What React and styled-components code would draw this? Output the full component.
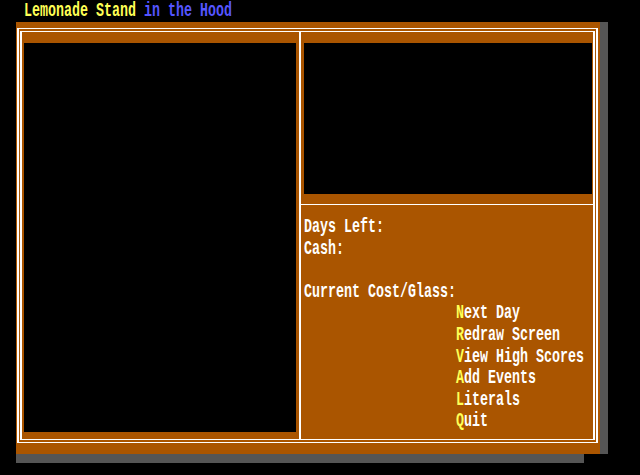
import React from 'react';
import styled, { createGlobalStyle } from 'styled-components';

// Text-mode palette
const BROWN = '#aa5500';
const YELLOW = '#ffff55';
const BLUE = '#5555ff';
const GRAY = '#555555';
const WHITE = '#ffffff';

const Global = createGlobalStyle`
  html, body { margin: 0; padding: 0; background: #000; }
`;

const Screen = styled.div`
  width: 640px;
  height: 475px;
  overflow: hidden;
  background: #000;
  color: ${WHITE};
  font-family: "Liberation Mono", "DejaVu Sans Mono", monospace;
  font-weight: bold;
  font-size: 13.33px;
`;

// One 21.6px text row, glyphs stretched tall like a VGA cell
const Line = styled.div`
  height: 21.6px;
  line-height: 21.6px;
  white-space: pre;
  padding-left: ${p => p.$indent || 0}px;
  color: ${p => p.$color || WHITE};
`;

const Glyphs = styled.span`
  display: inline-block;
  transform: translateY(1px) scaleY(1.5);
  transform-origin: 50% 55%;
`;

const Ink = styled.span`
  color: ${p => p.$c};
`;

const Window = styled.div`
  box-sizing: border-box;
  margin-left: 16px;
  width: 584px;
  height: 432px;
  background: ${BROWN};
  box-shadow: 8px 0 0 ${GRAY}, -8px 17px 0 -8px ${GRAY};
  padding: 6.75px 2px 10.8px 1px;
`;

const OuterRule = styled.div`
  box-sizing: border-box;
  height: 100%;
  border: solid ${WHITE};
  border-width: 1px 2px;
  padding: 1.7px 1px;
`;

const InnerRule = styled.div`
  box-sizing: border-box;
  height: 100%;
  border: solid ${WHITE};
  border-width: 1px 2px;
  display: grid;
  grid-template-columns: 277px 1fr;
`;

const LeftCol = styled.div`
  padding: 11.15px 3px 0 2px;
`;

const BlackPane = styled.div`
  background: #000;
  height: ${p => p.$h}px;
`;

const RightCol = styled.div`
  border-left: 2px solid ${WHITE};
  display: flex;
  flex-direction: column;
`;

const ViewPane = styled(BlackPane)`
  margin: 11.15px 1px 0 3px;
`;

const Divider = styled.div`
  height: 1px;
  background: ${WHITE};
  margin-top: 9.45px;
`;

const Info = styled.div`
  padding: 11.15px 0 0 3px;
`;

const menu = ['Next Day', 'Redraw Screen', 'View High Scores', 'Add Events', 'Literals', 'Quit'];

const MenuItem = ({ label }) => (
  <Line $indent={152}>
    <Glyphs>
      <Ink $c={YELLOW}>{label[0]}</Ink>
      {label.slice(1)}
    </Glyphs>
  </Line>
);

export default function App() {
  return (
    <>
      <Global />
      <Screen>
        <Line $indent={24}>
          <Glyphs>
            <Ink $c={YELLOW}>Lemonade Stand</Ink> <Ink $c={BLUE}>in the Hood</Ink>
          </Glyphs>
        </Line>
        <Window>
          <OuterRule>
            <InnerRule>
              <LeftCol>
                <BlackPane $h={388.8} />
              </LeftCol>
              <RightCol>
                <ViewPane $h={151.2} />
                <Divider />
                <Info>
                  <Line><Glyphs>Days Left:</Glyphs></Line>
                  <Line><Glyphs>Cash:</Glyphs></Line>
                  <Line />
                  <Line><Glyphs>Current Cost/Glass:</Glyphs></Line>
                  {menu.map(m => (
                    <MenuItem key={m} label={m} />
                  ))}
                </Info>
              </RightCol>
            </InnerRule>
          </OuterRule>
        </Window>
      </Screen>
    </>
  );
}
